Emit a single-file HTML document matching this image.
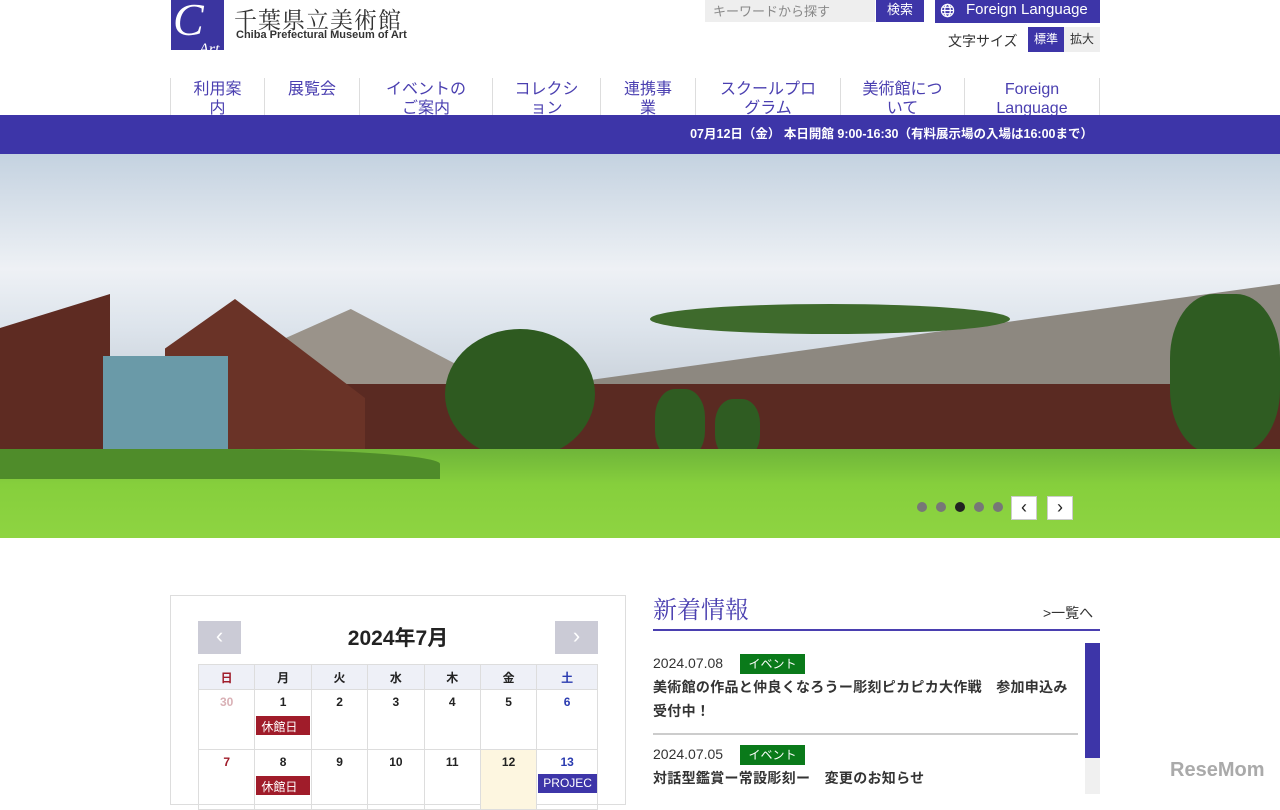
<!DOCTYPE html>
<html><head><meta charset="utf-8"><style>
*{margin:0;padding:0;box-sizing:border-box}
body{width:1280px;height:794px;overflow:hidden;background:#fff;font-family:"Liberation Sans","Noto Sans CJK JP",sans-serif;position:relative;color:#222}
.a{position:absolute}
.nav{position:absolute;top:78px;left:170px;width:930px;height:38px;display:flex}
.nav div{border-left:1px solid #ddd;color:#4a3fb0;font-size:16px;line-height:19px;text-align:center;height:38px;overflow:hidden;padding-top:2px}
.cal td{border:1px solid #ddd;text-align:center;vertical-align:top;font-size:12px;font-weight:bold;width:57px}
.tag{display:block;background:#a01c2a;color:#fff;font-size:12px;font-weight:normal;text-align:left;padding:2px 5px;margin:7px 1px 0;height:19px}
</style></head><body>
<div class="a" style="left:171px;top:0;width:53px;height:50px;background:#3b35a0;color:#fff;font:italic 46px 'Liberation Serif',serif;line-height:40px;padding-left:2px">C<span style="font-size:16px;position:absolute;left:28px;top:30px">Art</span></div>
<div class="a" style="left:234px;top:2px;font-size:23px;color:#333;font-family:'Liberation Serif','Noto Serif CJK SC',serif;letter-spacing:1px">千葉県立美術館</div>
<div class="a" style="left:236px;top:29px;font-size:11px;color:#333;font-weight:bold">Chiba Prefectural Museum of Art</div>
<div class="a" style="left:705px;top:0;width:170px;height:22px;background:#eee;color:#888;font-size:13px;padding:1px 8px">キーワードから探す</div>
<div class="a" style="left:876px;top:0;width:48px;height:22px;background:#3d35a8;color:#fff;font-size:13px;text-align:center;line-height:20px">検索</div>
<div class="a" style="left:935px;top:0;width:165px;height:23px;background:#3d35a8;color:#fff;font-size:15px;line-height:20px;padding-left:31px">Foreign Language</div>
<svg class="a" style="left:940px;top:3px" width="15" height="15" viewBox="0 0 16 16" fill="none" stroke="#fff" stroke-width="1.3"><circle cx="8" cy="8" r="6.5"/><ellipse cx="8" cy="8" rx="3" ry="6.5"/><path d="M1.5 8h13M3 4.5h10M3 11.5h10"/></svg>
<div class="a" style="left:948px;top:31px;font-size:14px;color:#333">文字サイズ</div>
<div class="a" style="left:1028px;top:27px;width:36px;height:25px;background:#3d35a8;color:#fff;font-size:12px;text-align:center;line-height:25px">標準</div>
<div class="a" style="left:1064px;top:27px;width:36px;height:25px;background:#eee;color:#333;font-size:12px;text-align:center;line-height:25px">拡大</div>
<div class="nav">
<div style="width:94px">利用案<br>内</div><div style="width:95px">展覧会</div><div style="width:133px">イベントの<br>ご案内</div><div style="width:108px">コレクシ<br>ョン</div><div style="width:95px">連携事<br>業</div><div style="width:145px">スクールプロ<br>グラム</div><div style="width:124px">美術館につ<br>いて</div><div style="width:136px;border-right:1px solid #ddd">Foreign<br>Language</div>
</div>
<div class="a" style="left:0;top:115px;width:1280px;height:39px;background:#3d35a8;color:#fff;font-size:12.5px;font-weight:bold;text-align:right;padding-right:187px;line-height:39px">07月12日（金） 本日開館 9:00-16:30（有料展示場の入場は16:00まで）</div>
<div class="a" style="left:0;top:154px;width:1280px;height:384px;overflow:hidden;background:linear-gradient(#c4d2e0,#eef1f5 30%,#dde4ec 45%,#cbd3dc 60%)">
<div class="a" style="left:270px;top:155px;width:1010px;height:90px;background:#9a938a;clip-path:polygon(0 40%,8% 0,25% 100%,0 100%)"></div>
<div class="a" style="left:590px;top:130px;width:690px;height:120px;background:#8d8880;clip-path:polygon(0 80%,100% 0,100% 100%,0 100%)"></div>
<div class="a" style="left:0;top:230px;width:1280px;height:80px;background:#5a2a22"></div>
<div class="a" style="left:0;top:140px;width:110px;height:170px;background:#5e2b22;clip-path:polygon(0 20%,100% 0,100% 100%,0 100%)"></div>
<div class="a" style="left:165px;top:145px;width:200px;height:165px;background:#6a3327;clip-path:polygon(0 30%,35% 0,100% 60%,100% 100%,0 100%)"></div>
<div class="a" style="left:103px;top:202px;width:125px;height:110px;background:#6a9aa8"></div>
<div class="a" style="left:445px;top:175px;width:150px;height:130px;background:#2e5a20;border-radius:50%"></div>
<div class="a" style="left:1170px;top:140px;width:110px;height:160px;background:#2f5c22;border-radius:40%"></div>
<div class="a" style="left:650px;top:150px;width:360px;height:30px;background:#3e6a2c;border-radius:50%"></div>
<div class="a" style="left:655px;top:235px;width:50px;height:70px;background:#2f5c22;border-radius:40%"></div>
<div class="a" style="left:715px;top:245px;width:45px;height:60px;background:#2f5c22;border-radius:40%"></div>
<div class="a" style="left:0;top:295px;width:1280px;height:89px;background:linear-gradient(#6fb53a,#86cf3c 40%,#8ed442)"></div>
<div class="a" style="left:0;top:295px;width:440px;height:30px;background:#4f8c2a;border-radius:0 50% 0 0"></div>
</div>
<div class="a" style="left:917px;top:502px;width:10px;height:10px;border-radius:50%;background:#777"></div>
<div class="a" style="left:936px;top:502px;width:10px;height:10px;border-radius:50%;background:#777"></div>
<div class="a" style="left:955px;top:502px;width:10px;height:10px;border-radius:50%;background:#222"></div>
<div class="a" style="left:974px;top:502px;width:10px;height:10px;border-radius:50%;background:#777"></div>
<div class="a" style="left:993px;top:502px;width:10px;height:10px;border-radius:50%;background:#777"></div>
<div class="a" style="left:1011px;top:496px;width:26px;height:24px;background:#fff;border:1px solid #ccc;text-align:center;font-size:18px;line-height:21px">‹</div>
<div class="a" style="left:1047px;top:496px;width:26px;height:24px;background:#fff;border:1px solid #ccc;text-align:center;font-size:18px;line-height:21px">›</div>
<div class="a" style="left:170px;top:595px;width:456px;height:210px;border:1px solid #ddd"></div>
<div class="a" style="left:198px;top:621px;width:43px;height:33px;background:#cbcbd6;color:#fff;font-size:22px;text-align:center;line-height:30px">‹</div>
<div class="a" style="left:555px;top:621px;width:43px;height:33px;background:#cbcbd6;color:#fff;font-size:22px;text-align:center;line-height:30px">›</div>
<div class="a" style="left:198px;top:622px;width:400px;text-align:center;font-size:21px;font-weight:bold;color:#222">2024年7月</div>
<table class="a cal" style="left:198px;top:664px;border-collapse:collapse;width:400px">
<tr style="height:25px;background:#eef0f7"><td style="color:#a01c2a;vertical-align:middle">日</td><td style="vertical-align:middle">月</td><td style="vertical-align:middle">火</td><td style="vertical-align:middle">水</td><td style="vertical-align:middle">木</td><td style="vertical-align:middle">金</td><td style="color:#2a3bb0;vertical-align:middle">土</td></tr>
<tr style="height:60px"><td style="color:#d9b0b5;padding-top:5px">30</td><td style="padding-top:5px">1<span class="tag">休館日</span></td><td style="padding-top:5px">2</td><td style="padding-top:5px">3</td><td style="padding-top:5px">4</td><td style="padding-top:5px">5</td><td style="color:#2a3bb0;padding-top:5px">6</td></tr>
<tr style="height:60px"><td style="color:#a01c2a;padding-top:5px">7</td><td style="padding-top:5px">8<span class="tag">休館日</span></td><td style="padding-top:5px">9</td><td style="padding-top:5px">10</td><td style="padding-top:5px">11</td><td style="padding-top:5px;background:#fdf6e0">12</td><td style="color:#2a3bb0;padding-top:5px">13<span class="tag" style="background:#3d35a8;margin:5px 0 0 1px">PROJEC</span></td></tr>
</table>
<div class="a" style="left:653px;top:590px;font-size:24px;color:#4a3fb0;font-family:'Liberation Serif','Noto Serif CJK SC',serif">新着情報</div>
<div class="a" style="left:1043px;top:603px;font-size:14px;color:#333">&gt;一覧へ</div>
<div class="a" style="left:653px;top:629px;width:447px;height:2px;background:#4a3fb0"></div>
<div class="a" style="left:1085px;top:643px;width:15px;height:151px;background:#f0f0f0"></div>
<div class="a" style="left:1085px;top:643px;width:15px;height:115px;background:#3d35a8"></div>
<div class="a" style="left:653px;top:655px;font-size:14px;color:#333">2024.07.08</div>
<div class="a" style="left:740px;top:654px;width:65px;height:20px;background:#0a7a1a;color:#fff;font-size:12px;text-align:center;line-height:20px">イベント</div>
<div class="a" style="left:653px;top:675px;width:422px;font-size:14px;font-weight:bold;line-height:24px;color:#333;letter-spacing:0.3px">美術館の作品と仲良くなろうー彫刻ピカピカ大作戦　参加申込み受付中！</div>
<div class="a" style="left:653px;top:733px;width:425px;height:2px;background:#ccc"></div>
<div class="a" style="left:653px;top:746px;font-size:14px;color:#333">2024.07.05</div>
<div class="a" style="left:740px;top:745px;width:65px;height:20px;background:#0a7a1a;color:#fff;font-size:12px;text-align:center;line-height:20px">イベント</div>
<div class="a" style="left:653px;top:768px;font-size:14px;font-weight:bold;color:#333;letter-spacing:0.3px">対話型鑑賞ー常設彫刻ー　変更のお知らせ</div>
<div class="a" style="left:1170px;top:759px;font-size:20px;font-weight:bold;color:#aaa">ReseMom</div>
</body></html>
